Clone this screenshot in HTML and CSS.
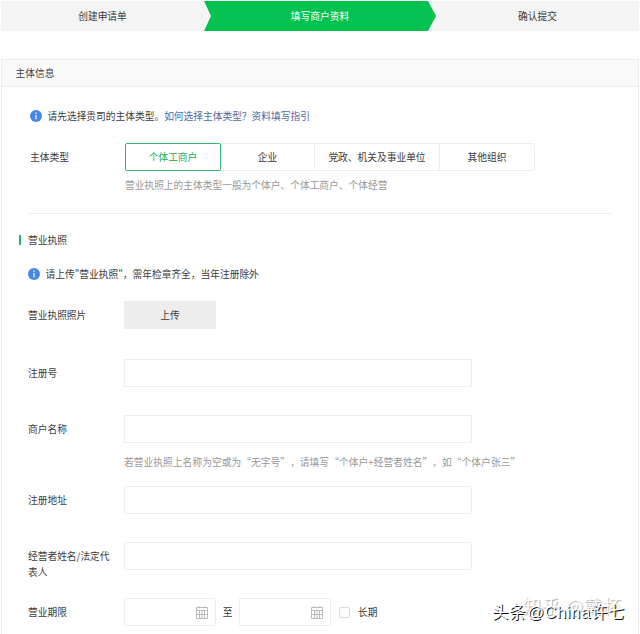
FILE: index.html
```html
<!DOCTYPE html>
<html lang="zh-CN">
<head>
<meta charset="utf-8">
<title>填写商户资料</title>
<link rel="stylesheet" href="styles.css">
</head>
<body>
<nav class="steps">
  <div class="step step-first">创建申请单</div>
  <div class="step step-active">填写商户资料</div>
  <div class="step step-last">确认提交</div>
</nav>
<main class="panel">
  <h1 class="panel-title">主体信息</h1>
  <section class="subject">
    <p class="notice">
      <svg class="info" viewBox="0 0 12 12"><circle cx="6" cy="6" r="6" fill="#4688e6"/><path d="M6 5v4.2M6 2.6v1.3" stroke="#fff" stroke-width="1.2"/></svg>
      <span>请先选择贵司的主体类型。<a class="link">如何选择主体类型？</a><a class="link">资料填写指引</a></span>
    </p>
    <div class="row type-row">
      <span class="label">主体类型</span>
      <div class="tabs">
        <span class="tab tab-on">个体工商户</span>
        <span class="tab">企业</span>
        <span class="tab">党政、机关及事业单位</span>
        <span class="tab">其他组织</span>
      </div>
    </div>
    <p class="hint type-hint">营业执照上的主体类型一般为个体户、个体工商户、个体经营</p>
  </section>
  <section class="license">
    <h2 class="sub-title">营业执照</h2>
    <p class="notice license-notice">
      <svg class="info" viewBox="0 0 12 12"><circle cx="6" cy="6" r="6" fill="#4688e6"/><path d="M6 5v4.2M6 2.6v1.3" stroke="#fff" stroke-width="1.2"/></svg>
      <span>请上传"营业执照"，需年检章齐全，当年注册除外</span>
    </p>
    <div class="row photo-row"><span class="label">营业执照照片</span><span class="upload">上传</span></div>
    <div class="row number-row"><span class="label">注册号</span><span class="field"></span></div>
    <div class="row name-row"><span class="label">商户名称</span><span class="field"></span></div>
    <p class="hint name-hint">若营业执照上名称为空或为“无字号”，请填写“个体户+经营者姓名”，如“个体户张三”</p>
    <div class="row address-row"><span class="label">注册地址</span><span class="field"></span></div>
    <div class="row owner-row"><span class="label">经营者姓名/法定代表人</span><span class="field"></span></div>
    <div class="row term-row">
      <span class="label">营业期限</span>
      <span class="date"><svg class="calendar" viewBox="0 0 12 13"><path d="M.5 1.5h11v11H.5zM.5 4.5h11M.5 8.5h11M3.5 4.5v8M6 4.5v8M8.5 4.5v8M3 0v2M9 0v2"/></svg></span>
      <span class="to">至</span>
      <span class="date"><svg class="calendar" viewBox="0 0 12 13"><path d="M.5 1.5h11v11H.5zM.5 4.5h11M.5 8.5h11M3.5 4.5v8M6 4.5v8M8.5 4.5v8M3 0v2M9 0v2"/></svg></span>
      <span class="check"></span><span>长期</span>
    </div>
  </section>
</main>
<div class="mark mark-back">知乎 @戴杯</div>
<div class="mark mark-front">头条<span class="handle">@China许七</span></div>
</body>
</html>
```
FILE: styles.css
```css
* { box-sizing: border-box; }
body {
  margin: 0;
  padding: 1px 1px 0;
  height: 634px;
  overflow: hidden;
  position: relative;
  background: #fff;
  color: #3c3c3c;
  font: 9.72px/16px "Noto Sans CJK SC", sans-serif;
  text-spacing-trim: space-all;
}
h1, h2, p { margin: 0; font: inherit; }
.steps { display: flex; height: 30px; background: #f5f5f5; }
.step { display: flex; align-items: center; justify-content: center; }
.step-first { width: 203px; }
.step-active {
  width: 232px;
  background: #04c250;
  color: #fff;
  clip-path: polygon(0 0, 224px 0, 100% 50%, 224px 100%, 0 100%, 7px 50%);
}
.step-last { width: 203px; }
.panel {
  width: 638px;
  height: 600px;
  margin-top: 28px;
  border: 1px solid #ededed;
}
.panel-title {
  height: 27px;
  padding: 0 13.5px;
  line-height: 27px;
  background: #fafafa;
  border-bottom: 1px solid #ededed;
}
.subject {
  height: 127px;
  margin: 0 27px 0 27px;
  padding: 21px 0 0 1px;
  border-bottom: 1px solid #ededed;
}
.notice { display: flex; align-items: center; gap: 5.5px; height: 16px; }
.info { width: 12px; height: 12px; flex: none; }
.link { color: #516b9d; }
.row { display: flex; align-items: center; height: 28px; white-space: nowrap; }
.label { width: 96px; flex: none; }
.type-row { margin-top: 19px; }
.type-row .label { width: 95px; }
.tabs { display: flex; width: 410px; height: 28px; border: 1px solid #eee; border-radius: 2px; }
.tab { display: flex; align-items: center; justify-content: center; width: 94px; border-right: 1px solid #eee; }
.tab:nth-child(3) { width: 125px; }
.tab:last-child { border: 0; }
.tab.tab-on {
  width: 96px;
  margin: -1px 0 -1px -1px;
  border: 1px solid #35b675;
  border-radius: 2px;
  color: #20ae61;
}
.hint { color: #999; white-space: nowrap; }
.type-hint { padding: 6px 0 0 95px; }
.license { padding: 18px 0 0 26px; }
.sub-title { height: 16px; position: relative; }
.sub-title::before {
  content: "";
  position: absolute;
  left: -9px;
  top: 3px;
  width: 2px;
  height: 10px;
  background: #29ad6b;
}
.license-notice { margin-top: 18px; }
.photo-row { margin-top: 19px; }
.upload { width: 92px; height: 28px; line-height: 28px; text-align: center; background: #ededed; border-radius: 1px; }
.number-row { margin-top: 30px; }
.field { width: 348px; height: 28px; border: 1px solid #eee; border-radius: 1px; }
.name-row { margin-top: 28px; }
.name-hint { padding-left: 96px; margin-top: 11px; letter-spacing: .05px; }
.address-row { margin-top: 16px; }
.owner-row, .term-row { margin-top: 28px; }
.owner-row .label { align-self: flex-start; margin-top: 6px; padding-right: 12px; white-space: normal; }
.date { display: flex; align-items: center; justify-content: flex-end; width: 92px; height: 28px; padding-right: 7px; border: 1px solid #eee; border-radius: 1px; }
.calendar { width: 12px; height: 13px; fill: none; stroke: #bbb; stroke-width: 1; }
.to { width: 23px; text-align: center; }
.check { width: 11px; height: 11px; margin: 0 8px; border: 1px solid #ddd; border-radius: 2px; }
.mark { position: absolute; white-space: nowrap; color: #fff; }
.mark-back { left: 523px; top: 595px; font-size: 18px; line-height: 20px; letter-spacing: 1px; text-shadow: 1px 1px 1px #aaa; }
.mark-front { left: 492px; top: 602px; font: 16.5px/20px "Liberation Sans", "Noto Sans CJK SC", sans-serif; letter-spacing: .6px; text-shadow: 1px 1px 0 #111; }
.handle { margin-left: 1px; }
```
